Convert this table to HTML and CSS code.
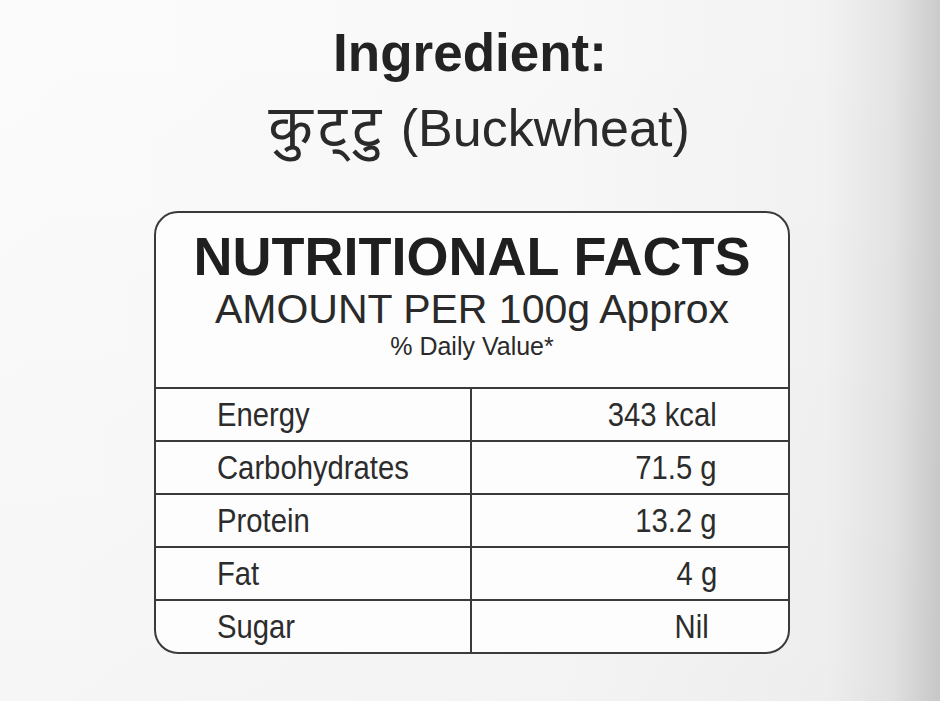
FILE: index.html
```html
<!DOCTYPE html>
<html lang="en">
<head>
<meta charset="utf-8">
<title>Ingredient: Buckwheat</title>
<link rel="stylesheet" href="styles.css">
</head>
<body>
  <main class="page">
    <header class="ingredient">
      <h1 class="ingredient-title">Ingredient:</h1>
      <p class="ingredient-name"><span class="hindi" lang="hi">कुट्&#x200C;टु</span> (Buckwheat)</p>
    </header>

    <section class="facts">
      <div class="facts-head">
        <h2 class="facts-title">NUTRITIONAL FACTS</h2>
        <p class="facts-amount">AMOUNT PER 100g Approx</p>
        <p class="facts-daily">% Daily Value*</p>
      </div>
      <table class="facts-table">
        <tbody>
          <tr><td class="nutrient"><span class="cell-text">Energy</span></td><td class="value"><span class="cell-text">343 kcal</span></td></tr>
          <tr><td class="nutrient"><span class="cell-text">Carbohydrates</span></td><td class="value"><span class="cell-text">71.5 g</span></td></tr>
          <tr><td class="nutrient"><span class="cell-text">Protein</span></td><td class="value"><span class="cell-text">13.2 g</span></td></tr>
          <tr><td class="nutrient"><span class="cell-text">Fat</span></td><td class="value"><span class="cell-text">4 g</span></td></tr>
          <tr><td class="nutrient"><span class="cell-text">Sugar</span></td><td class="value value-nil"><span class="cell-text">Nil</span></td></tr>
        </tbody>
      </table>
    </section>
  </main>
</body>
</html>
```

FILE: styles.css
```css
html, body {
  margin: 0;
  padding: 0;
}

body {
  width: 940px;
  height: 701px;
  overflow: hidden;
  font-family: "Liberation Sans", Arial, sans-serif;
  color: #262626;
  background:
    linear-gradient(to bottom, rgba(0,0,0,0) 0%, rgba(0,0,0,0.02) 100%),
    linear-gradient(to right, #fbfbfb 0%, #f8f8f8 60%, #f2f2f2 88%, #e4e4e4 95%, #cbcbcb 100%);
}

.page {
  display: flex;
  flex-direction: column;
  align-items: center;
  padding-top: 23px;
}

.ingredient {
  text-align: center;
}

.ingredient-title {
  margin: 0;
  font-size: 53px;
  line-height: 60px;
  font-weight: 700;
  color: #232323;
}

.ingredient-name {
  margin: 15px 0 0 0;
  font-size: 52px;
  line-height: 60px;
  color: #2a2a2a;
  padding-left: 18px;
}

.hindi {
  font-family: "Noto Sans Devanagari", "Lohit Devanagari", "FreeSans", "Mangal", sans-serif;
  font-size: 58px;
  letter-spacing: 5px;
}

.facts {
  box-sizing: border-box;
  width: 636px;
  margin-top: 49px;
  margin-left: 4px;
  border: 2px solid #3a3a3a;
  border-radius: 24px;
  overflow: hidden;
  background: #fdfdfd;
}

.facts-head {
  text-align: center;
  padding: 13px 0 27px;
  border-bottom: 2px solid #3a3a3a;
}

.facts-title {
  margin: 0;
  font-size: 54px;
  line-height: 60px;
  font-weight: 700;
  color: #1f1f1f;
}

.facts-amount {
  margin: 0;
  font-size: 41px;
  line-height: 46px;
  color: #2a2a2a;
}

.facts-daily {
  margin: 0;
  font-size: 25px;
  line-height: 28px;
  color: #2a2a2a;
}

.facts-table {
  width: 100%;
  border-collapse: collapse;
  font-size: 34px;
  color: #2c2c2c;
}

.facts-table tr + tr td {
  border-top: 2px solid #3a3a3a;
}

.facts-table td {
  height: 51px;
  line-height: 51px;
  padding: 0;
  white-space: nowrap;
}

.cell-text {
  display: inline-block;
  transform: scaleX(0.86);
}

.nutrient {
  width: 253px;
  padding-left: 61px !important;
  border-right: 2px solid #3a3a3a;
}

.nutrient .cell-text {
  transform-origin: left center;
}

.value {
  text-align: right;
  padding-right: 71px !important;
}

.value .cell-text {
  transform-origin: right center;
}

.value-nil {
  padding-right: 79px !important;
}
```
